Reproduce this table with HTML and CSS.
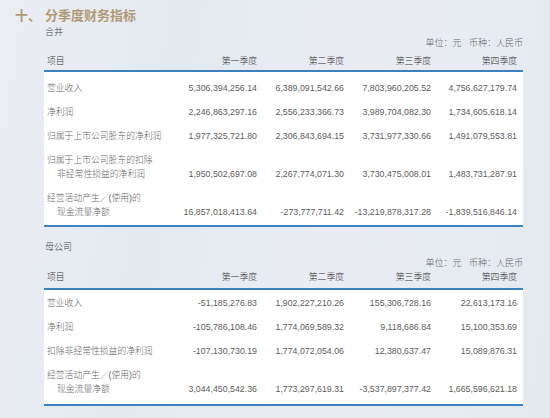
FILE: index.html
```html
<!DOCTYPE html>
<html lang="zh">
<head>
<meta charset="utf-8">
<title>分季度财务指标</title>
<link rel="stylesheet" href="styles.css">
</head>
<body>
<div class="page">
  <h1 class="title"><span class="num">十、</span><span>分季度财务指标</span></h1>
  <div class="section">
    <div class="sub">合并</div>
    <div class="unit">单位：元&nbsp;&nbsp;&nbsp;币种：人民币</div>
    <table class="fin fin-a">
      <colgroup><col class="c-item"><col class="c-q"><col class="c-q"><col class="c-q"><col class="c-q4"></colgroup>
      <thead>
        <tr><th class="item">项目</th><th>第一季度</th><th>第二季度</th><th>第三季度</th><th>第四季度</th></tr>
      </thead>
      <tbody>
        <tr><td class="item">营业收入</td><td>5,306,394,256.14</td><td>6,389,091,542.66</td><td>7,803,960,205.52</td><td>4,756,627,179.74</td></tr>
        <tr><td class="item">净利润</td><td>2,246,863,297.16</td><td>2,556,233,366.73</td><td>3,989,704,082.30</td><td>1,734,605,618.14</td></tr>
        <tr><td class="item">归属于上市公司股东的净利润</td><td>1,977,325,721.80</td><td>2,306,843,694.15</td><td>3,731,977,330.66</td><td>1,491,079,553.81</td></tr>
        <tr><td class="item">归属于上市公司股东的扣除<br><span class="ind">非经常性损益的净利润</span></td><td class="bot">1,950,502,697.08</td><td class="bot">2,267,774,071.30</td><td class="bot">3,730,475,008.01</td><td class="bot">1,483,731,287.91</td></tr>
        <tr><td class="item">经营活动产生／(使用)的<br><span class="ind">现金流量净额</span></td><td class="bot">16,857,018,413.64</td><td class="bot">-273,777,711.42</td><td class="bot">-13,219,878,317.28</td><td class="bot">-1,839,516,846.14</td></tr>
      </tbody>
    </table>
  </div>
  <div class="section section-b">
    <div class="sub">母公司</div>
    <div class="unit unit-b">单位：元&nbsp;&nbsp;&nbsp;币种：人民币</div>
    <table class="fin fin-b">
      <colgroup><col class="c-item"><col class="c-q"><col class="c-q"><col class="c-q"><col class="c-q4"></colgroup>
      <thead>
        <tr><th class="item">项目</th><th>第一季度</th><th>第二季度</th><th>第三季度</th><th>第四季度</th></tr>
      </thead>
      <tbody>
        <tr><td class="item">营业收入</td><td>-51,185,276.83</td><td>1,902,227,210.26</td><td>155,306,728.16</td><td>22,613,173.16</td></tr>
        <tr><td class="item">净利润</td><td>-105,786,108.46</td><td>1,774,069,589.32</td><td>9,118,686.84</td><td>15,100,353.69</td></tr>
        <tr><td class="item">扣除非经常性损益的净利润</td><td>-107,130,730.19</td><td>1,774,072,054.06</td><td>12,380,637.47</td><td>15,089,876.31</td></tr>
        <tr><td class="item">经营活动产生／(使用)的<br><span class="ind">现金流量净额</span></td><td class="bot">3,044,450,542.36</td><td class="bot">1,773,297,619.31</td><td class="bot">-3,537,897,377.42</td><td class="bot">1,665,596,621.18</td></tr>
      </tbody>
    </table>
  </div>
</div>
</body>
</html>
```

FILE: styles.css
```css
html, body {
  margin: 0;
  padding: 0;
}
body {
  width: 550px;
  height: 418px;
  overflow: hidden;
  background: #e4e9f0;
  background-image: linear-gradient(100deg, rgba(255,255,255,0.25) 0%, rgba(255,255,255,0) 30%, rgba(255,255,255,0.2) 60%, rgba(255,255,255,0) 100%);
  font-family: "Liberation Sans", "Noto Sans CJK TC", sans-serif;
  color: #555;
}
.page {
  padding-top: 8px;
}
.title {
  margin: 0 0 0 15px;
  height: 16px;
  line-height: 16px;
  font-size: 13px;
  font-weight: bold;
  color: #b09a76;
  font-family: "Liberation Serif", "Noto Sans CJK SC", serif;
  display: flex;
}
.title .num {
  width: 30px;
}
.section {
  padding-left: 44px;
  width: 479px;
}
.sub {
  margin-top: 3px;
  padding-left: 1px;
  font-size: 9px;
  line-height: 11px;
  color: #444;
  font-weight: 300;
}
.unit {
  margin-top: -1px;
  text-align: right;
  font-size: 9px;
  line-height: 12px;
  color: #666;
  font-weight: 300;
}
.section-b .sub {
  margin-top: 14px;
  line-height: 12px;
}
.unit-b {
  margin-top: 4px;
}
.fin {
  width: 479px;
  table-layout: fixed;
  border-collapse: collapse;
  font-size: 8.8px;
  line-height: 14px;
}
.c-item { width: 132px; }
.c-q { width: 87px; }
.c-q4 { width: 86px; }
.fin th {
  font-weight: 300;
  color: #333;
  text-align: right;
  padding: 5px 6px 2px 0;
  white-space: nowrap;
  border-bottom: 2px solid #3b82bf;
}
.fin th.item {
  text-align: left;
  padding-left: 3px;
}
.fin tbody {
  background: #fff;
  border-bottom: 2px solid #3b82bf;
}
.fin td {
  text-align: right;
  white-space: nowrap;
  padding: 9px 6px 1px 0;
  vertical-align: top;
  color: #5c5c5c;
}
.fin td.item {
  text-align: left;
  padding-left: 3px;
  color: #666;
  font-weight: 300;
}
.fin td.bot {
  vertical-align: bottom;
}
.fin .ind {
  padding-left: 10px;
}
.fin-a tbody tr:last-child td {
  padding-bottom: 6px;
}
.fin-b th {
  padding-top: 1px;
  padding-bottom: 4px;
}
.fin-b td {
  padding-top: 6px;
  padding-bottom: 4px;
}
.fin-b tbody tr:last-child td {
  padding-bottom: 8px;
}
```
